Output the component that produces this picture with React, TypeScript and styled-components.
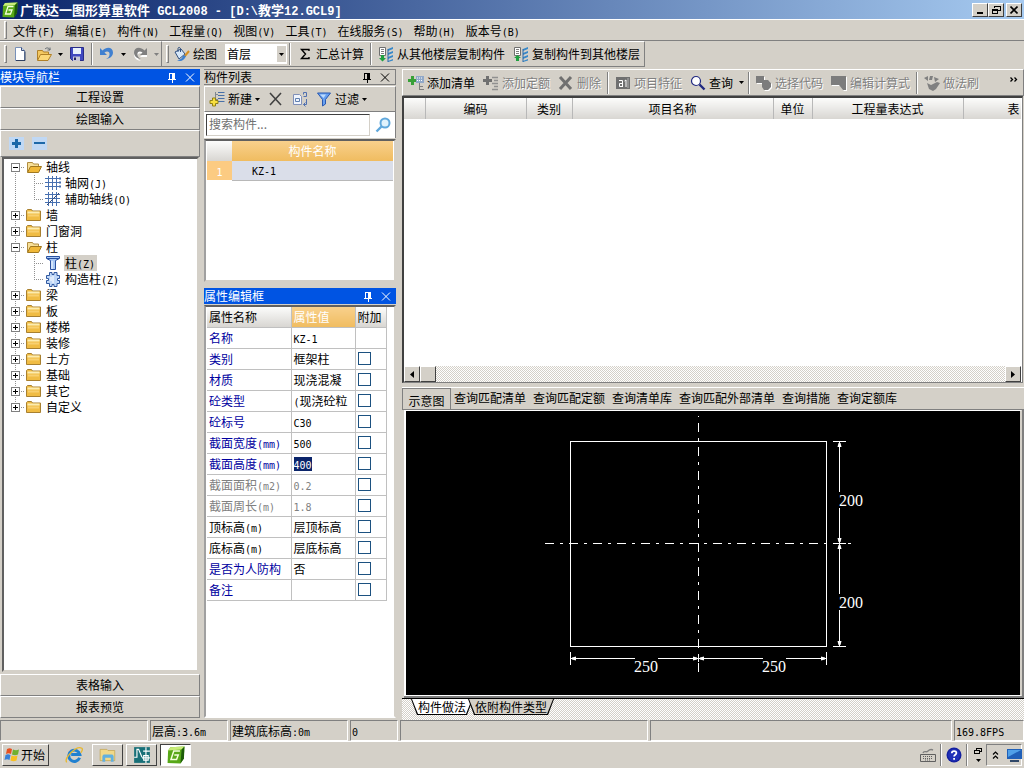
import React from "react";
import styled, { createGlobalStyle, css } from "styled-components";

const face = "#d4d0c8";
const shade = "#808080";
const blue = "#0054e3";

const GlobalStyle = createGlobalStyle`
  * { box-sizing: border-box; }
  body { margin: 0; background: ${face}; }
  body, button, input, select, table {
    font-family: "Noto Sans CJK SC", sans-serif;
    font-size: 12px;
    line-height: 16px;
    color: #000;
  }
  button { background: none; border: 0; padding: 0; white-space: nowrap; }
  ul { list-style: none; margin: 0; padding: 0; }
  svg { display: block; flex: none; }
`;

const raised = css`
  border: 1px solid;
  border-color: #fff ${shade} ${shade} #fff;
`;
const sunken = css`
  border: 1px solid;
  border-color: ${shade} #fff #fff ${shade};
`;
const checker = css`
  background: repeating-conic-gradient(#fff 0 25%, ${face} 0 50%) 0 0 / 2px 2px;
`;

/* ---------- text ---------- */

const Latin = styled.span`
  font-family: "DejaVu Sans Mono", monospace;
  font-size: 10px;
  line-height: 10px;
  white-space: pre;
`;

function Mixed({ text }: { text: string }) {
  return (
    <span>
      {text.split(/([\x20-\x7e]+)/).filter(Boolean).map((part, i) =>
        /^[\x20-\x7e]/.test(part) ? <Latin key={i}>{part}</Latin> : part
      )}
    </span>
  );
}

/* ---------- frame ---------- */

const Page = styled.div`
  display: flex;
  flex-direction: column;
  height: 100vh;
  min-height: 640px;
  min-width: 800px;
  overflow: hidden;
`;

const TitleBar = styled.header`
  display: flex;
  align-items: center;
  gap: 2px;
  height: 19px;
  flex: none;
  padding: 0 2px;
  background: linear-gradient(90deg, #0a246a, #a6caf0);
`;

const Title = styled.h1`
  flex: 1;
  margin: 0;
  font-size: 13px;
  line-height: 19px;
  font-weight: 700;
  color: #fff;
  ${Latin} {
    font-family: "Liberation Mono", monospace;
    font-size: 12px;
  }
`;

const WindowButtons = styled.div`
  display: flex;
  button:last-child { margin-left: 2px; }
`;

const WindowButton = styled.button`
  display: grid;
  place-items: center;
  width: 16px;
  height: 14px;
  background: ${face};
  border: 1px solid;
  border-color: #fff #404040 #404040 #fff;
`;

const MenuBar = styled.nav`
  display: flex;
  align-items: center;
  height: 22px;
  flex: none;
  border-top: 1px solid #fff;
  border-bottom: 1px solid ${shade};
  padding: 0 4px;
`;

const MenuButton = styled.button`
  padding: 1px 5px 0;
  height: 20px;
`;

const Grip = styled.span`
  flex: none;
  width: 3px;
  height: 18px;
  margin-right: 1px;
  ${raised}
`;

const ToolRow = styled.div`
  display: flex;
  height: 26px;
  flex: none;
`;

const ToolBand = styled.div`
  display: flex;
  align-items: center;
  padding-left: 4px;
  ${raised}
  border-left: 0;
`;

const Tool = styled.button<{ $off?: boolean }>`
  display: flex;
  align-items: center;
  gap: 3px;
  height: 22px;
  padding: 0 4px;
  flex: none;
  ${(p) => p.$off && css`color: ${shade}; text-shadow: 1px 1px #fff;`}
`;

const ArrowTool = styled(Tool)`
  padding: 0 2px;
`;

const Divider = styled.span<{ $h?: number }>`
  flex: none;
  width: 2px;
  height: ${(p) => p.$h ?? 22}px;
  margin: 0 2px;
  border-left: 1px solid ${shade};
  border-right: 1px solid #fff;
`;

const Combo = styled.div`
  display: flex;
  align-items: center;
  width: 62px;
  height: 20px;
  margin-left: 4px;
  background: #fff;
  border: 1px solid #fff;
`;

const ComboSelect = styled.select`
  appearance: none;
  flex: 1;
  min-width: 0;
  height: 18px;
  padding: 0 1px;
  border: 0;
  background: transparent;
`;

const ComboArrow = styled.span`
  display: grid;
  place-items: center;
  width: 9px;
  height: 16px;
  background: ${face};
`;

const Workspace = styled.main`
  display: grid;
  grid-template-columns: 200px 192px minmax(0, 1fr);
  flex: 1;
  min-height: 0;
  padding-top: 2px;
`;

const Column = styled.section`
  display: flex;
  flex-direction: column;
  min-height: 0;
  min-width: 0;
`;

const LeftColumn = styled(Column)`
  padding-bottom: 2px;
`;
const MiddleColumn = styled(Column)`
  margin-left: 4px;
  margin-right: -4px;
  padding-bottom: 2px;
`;
const RightColumn = styled(Column)`
  margin-left: 10px;
`;

/* ---------- dock panels ---------- */

const DockTitle = styled.div<{ $active?: boolean }>`
  display: flex;
  align-items: center;
  flex: none;
  height: 16px;
  padding-right: 4px;
  gap: 6px;
  color: ${(p) => (p.$active ? "#fff" : "#000")};
  background: ${(p) => (p.$active ? blue : face)};
  border: ${(p) => (p.$active ? "0" : `1px solid ${shade}`)};
  border-left: 0;
  margin-bottom: 1px;
  h2 { flex: 1; margin: 0; font-size: 12px; line-height: 14px; font-weight: 400; }
  button { color: inherit; width: 12px; height: 12px; }
`;

function DockHeader({ title, active }: { title: string; active?: boolean }) {
  return (
    <DockTitle $active={active}>
      <h2>{title}</h2>
      <button aria-label="pin">
        <svg width="12" height="12" viewBox="0 0 12 12" shapeRendering="crispEdges" fill="currentColor">
          <path d="M3 2h6v6h1v1H7v3H6V9H2V8h1zM4 3v5h2V3z" fillRule="evenodd" />
        </svg>
      </button>
      <button aria-label="close">
        <svg width="12" height="12" viewBox="0 0 12 12" stroke="currentColor" fill="none">
          <path d="M2 2.500l8 8M10 2.500l-8 8" />
        </svg>
      </button>
    </DockTitle>
  );
}

const NavButton = styled.button`
  flex: none;
  height: 22px;
  ${raised}
`;

const TreeTools = styled.div`
  display: flex;
  align-items: center;
  gap: 8px;
  flex: none;
  height: 27px;
  padding: 0 8px;
  ${raised}
`;

const SquareButton = styled.button`
  display: grid;
  place-items: center;
  width: 15px;
  height: 13px;
  background: #c0d8f4;
`;

const TreeBox = styled.div`
  flex: 1;
  min-height: 0;
  overflow: hidden;
  background: #fff;
  border: 2px solid;
  border-color: #606060 ${face} ${face} #606060;
  margin: 0 1px 2px 2px;
`;

const dotsDown = "repeating-linear-gradient(#909090 0 1px, transparent 1px 2px)";
const dotsAcross = "repeating-linear-gradient(90deg, #909090 0 1px, transparent 1px 2px)";

const TreeRow = styled.div`
  display: flex;
  align-items: center;
  height: 16px;
`;

type Run = "full" | "top" | "bottom";

const Branch = styled.span<{ $run: Run; $arm?: boolean; $x: number; $w: number }>`
  display: flex;
  align-items: center;
  flex: none;
  width: ${(p) => p.$w}px;
  height: 16px;
  padding-left: ${(p) => p.$x - 4}px;
  background:
    ${dotsDown} ${(p) => p.$x}px ${(p) => (p.$run === "bottom" ? 8 : 0)}px / 1px ${(p) => (p.$run === "full" ? 16 : 8)}px no-repeat,
    ${dotsAcross} ${(p) => p.$x}px 8px / ${(p) => (p.$arm ? p.$w - p.$x - 1 : 0)}px 1px no-repeat;
`;

const Expander = styled.button`
  display: grid;
  place-items: center;
  width: 9px;
  height: 9px;
  background: #fff;
  border: 1px solid ${shade};
`;

const TreeLabel = styled.span<{ $selected?: boolean }>`
  margin-left: 3px;
  padding: 0 2px 0 1px;
  line-height: 16px;
  background: ${(p) => (p.$selected ? face : "transparent")};
`;

/* ---------- component list ---------- */

const ListTools = styled.div`
  display: flex;
  align-items: center;
  flex: none;
  height: 26px;
  ${raised}
`;

const SearchRow = styled.form`
  display: flex;
  align-items: center;
  flex: none;
  height: 26px;
  padding-left: 2px;
  background: #fff;
  border-right: 1px solid ${shade};
  button { display: grid; place-items: center; flex: 1; }
`;

const SearchInput = styled.input`
  width: 164px;
  height: 22px;
  padding: 0 2px 4px;
  border: 1px solid;
  border-color: #404040 ${face} ${face} #404040;
  outline: 0;
  &::placeholder { color: #707070; opacity: 1; }
`;

const ListBox = styled.div`
  height: 143px;
  flex: none;
  margin: 1px 0 6px;
  padding: 0 1px;
  background: #fff;
  border: 2px solid;
  border-color: #606060 ${face} ${face} #a0a0a0;
`;

const orange = "linear-gradient(#f8d08c, #f0bc60)";
const silver = "linear-gradient(#fcfcfb, #d8d6d2)";

const ListTable = styled.table`
  width: 100%;
  table-layout: fixed;
  border-collapse: collapse;
  th, td { padding: 0; font-weight: 400; }
  thead th { height: 20px; color: #fff; background: ${orange}; }
  thead td { background: ${silver}; }
  tbody th { height: 19px; color: #fff; background: #fccb82; }
  tbody td { padding-left: 20px; background: #dadee9; border-bottom: 1px solid #b8b8b8; }
`;

/* ---------- property grid ---------- */

const PropBox = styled.div`
  flex: 1;
  min-height: 0;
  overflow: hidden;
  padding-left: 1px;
  background: #fff;
  border: 2px solid;
  border-color: #606060 ${face} #fff #a0a0a0;
`;

const PropTable = styled.table`
  width: 179px;
  table-layout: fixed;
  border-collapse: collapse;
  th, td {
    height: 21px;
    padding: 0 0 0 2px;
    font-weight: 400;
    text-align: left;
    white-space: nowrap;
    overflow: hidden;
    border-right: 1px solid #c0c0c0;
    border-bottom: 1px solid #c0c0c0;
  }
  thead th { height: 20px; background: ${silver}; }
  thead th:nth-child(2) { color: #fff; background: ${orange}; }
`;

const PropRow = styled.tr<{ $tone: "blue" | "gray" | "black" }>`
  th { color: ${(p) => ({ blue: "#0000a0", gray: "#808080", black: "#000" })[p.$tone]}; }
  td { color: ${(p) => (p.$tone === "gray" ? "#808080" : "#000")}; }
`;

const Tick = styled.input`
  appearance: none;
  display: block;
  width: 13px;
  height: 13px;
  margin: 0;
  border: 1px solid #1c5180;
  background: #fff;
`;

const Highlight = styled.mark`
  display: inline-block;
  line-height: 14px;
  color: #fff;
  background: #0a246a;
`;

/* ---------- bill table ---------- */

const BillTools = styled.div`
  display: flex;
  align-items: center;
  flex: none;
  height: 27px;
  padding-left: 1px;
  overflow: hidden;
  ${raised}
`;

const Chevron = styled.button`
  margin-left: auto;
  padding: 0 5px 6px;
`;

const BillBox = styled.div`
  display: flex;
  flex-direction: column;
  flex: 287 1 0;
  min-height: 0;
  background: #fff;
  border: 1px solid;
  border-color: #404040 ${shade} ${shade} #404040;
  border-width: 2px 1px 1px 2px;
  padding-right: 1px;
  margin: 0 1px 4px 0;
`;

const BillTable = styled.table`
  width: 100%;
  table-layout: fixed;
  border-collapse: collapse;
  th {
    height: 21px;
    padding: 0;
    font-weight: 400;
    white-space: nowrap;
    overflow: hidden;
    background: ${silver};
    border-right: 1px solid #b8b8b8;
  }
  th:last-child { padding-left: 44px; text-align: left; border-right: 0; }
`;

const ScrollTrack = styled.div`
  display: flex;
  flex: none;
  height: 16px;
  margin-top: auto;
  ${checker}
  button:last-child { margin-left: auto; }
`;

const ScrollPart = styled.button`
  display: grid;
  place-items: center;
  width: 16px;
  height: 16px;
  background: ${face};
  border: 1px solid;
  border-color: #fff #404040 #404040 #fff;
`;

/* ---------- schematic ---------- */

const QueryTabs = styled.div`
  display: flex;
  flex: none;
  gap: 7px;
  height: 23px;
  border-top: 1px solid #fff;
  border-bottom: 1px solid ${shade};
  button { height: 20px; }
  button:first-child {
    height: 22px;
    width: 49px;
    margin-right: -4px;
    padding-top: 3px;
    border: 1px solid ${shade};
    border-bottom: 0;
  }
`;

const Canvas = styled.div`
  display: flex;
  flex: 287 1 0;
  min-height: 0;
  background: #000;
  border: 2px solid #fff;
  border-right-color: ${face};
  border-width: 1px 2px 1px 2px;
  box-shadow: 0 2px #808080, 2px 0 #808080, 2px 2px #808080;
  margin: 0 2px 2px;
  svg { width: 100%; height: 100%; }
`;

const SheetTabs = styled.div`
  display: flex;
  flex: none;
  height: 22px;
  padding-left: 9px;
  border-top: 1px solid #000;
  ${checker}
`;

const SheetTab = styled.button<{ $on?: boolean }>`
  height: 16px;
  padding: 0 1px 1px;
  background: #000;
  clip-path: polygon(0 0, 100% 0, calc(100% - 6px) 100%, 6px 100%);
  & + & { margin-left: -5px; }
  span {
    display: block;
    height: 15px;
    padding: 0 6px;
    line-height: 15px;
    background: ${(p) => (p.$on ? "#fff" : face)};
    clip-path: polygon(0 0, 100% 0, calc(100% - 6px) 100%, 6px 100%);
  }
`;

/* ---------- status bar and taskbar ---------- */

const StatusBar = styled.footer`
  display: flex;
  gap: 2px;
  flex: none;
  height: 21px;
`;

const StatusCell = styled.div<{ $w?: number }>`
  ${(p) => (p.$w ? css`width: ${p.$w}px; flex: none;` : css`flex: 1;`)}
  padding: 0 1px;
  line-height: 19px;
  white-space: nowrap;
  ${sunken}
`;

const Taskbar = styled.div`
  display: flex;
  align-items: center;
  gap: 3px;
  flex: none;
  height: 27px;
  padding: 0 2px;
  border-top: 1px solid #fff;
`;

const StartButton = styled.button`
  display: flex;
  align-items: center;
  gap: 1px;
  width: 47px;
  height: 22px;
  padding: 0 1px;
  border: 1px solid;
  border-color: #fff #404040 #404040 #fff;
  margin-right: 6px;
`;

const TaskButton = styled.button<{ $look: "flat" | "up" | "down" }>`
  display: grid;
  place-items: center;
  width: 31px;
  height: 22px;
  border: 1px solid transparent;
  ${(p) => p.$look === "up" && css`border-color: #fff #404040 #404040 #fff;`}
  ${(p) => p.$look === "down" && css`background: #fff; border-color: #404040 #fff #fff #404040;`}
`;

const Tray = styled.div`
  display: flex;
  align-items: center;
  gap: 2px;
  margin-left: auto;
`;

const TrayStack = styled.div`
  display: grid;
  justify-items: center;
  gap: 4px;
  width: 12px;
`;

const TrayBox = styled.div`
  display: flex;
  align-items: center;
  gap: 7px;
  width: 36px;
  height: 22px;
  padding: 0 1px 0 5px;
  ${sunken}
`;

/* ---------- drawings ---------- */

const Arrow = ({ dir = "down" }: { dir?: "down" | "left" | "right" }) => {
  const d = { down: "M0 0h5L2.500 3z", left: "M4 0v7L0 3.500z", right: "M0 0v7l4-3.500z" }[dir];
  const [w, h] = dir === "down" ? [5, 3] : [4, 7];
  return <svg width={w} height={h} viewBox={`0 0 ${w} ${h}`}><path d={d} fill="currentColor" /></svg>;
};

const Glyph = ({ children, size = 16 }: { children: React.ReactNode; size?: number }) => (
  <svg width={size} height={size} viewBox="0 0 16 16" fill="none" aria-hidden="true">{children}</svg>
);

const AppLogo = ({ size = 16 }: { size?: number }) => (
  <Glyph size={size}>
    <path d="M3 1L15.500.5 15 11l-3 4.500L.5 15 1 4z" fill="#58a818" />
    <path d="M3 1L15.500.5 13 3 1 4z" fill="#c8ec78" />
    <path d="M13 3l2.500-2.500L15 11l-3 4.500z" fill="#1c5c08" />
    <path d="M11.500 4.500H6L3.500 12h5l1.500-4H6.500" stroke="#f4ffdc" strokeWidth="1.300" />
  </Glyph>
);
const NewIcon = () => (
  <Glyph>
    <path d="M3.500 1.500h6l3 3v10h-9z" fill="#fff" stroke="#7890b8" />
    <path d="M9.500 1.500v3h3" fill="#c8d8f0" stroke="#405078" />
    <path d="M4 14.500h9v-9" stroke="#304060" />
  </Glyph>
);
const OpenIcon = () => (
  <Glyph>
    <path d="M1.500 14V4.500h5l1 1.500h5v3" fill="#f4c860" stroke="#b08028" />
    <path d="M1.500 14.500l3-6h11l-3.500 6z" fill="#fcd878" stroke="#b08028" />
    <path d="M9 3c2-2 4-1 5 1m0-2.500V4h-2.500" stroke="#606870" />
  </Glyph>
);
const SaveIcon = () => (
  <Glyph>
    <path d="M1.500 1.500h13v13h-11l-2-2z" fill="#4048c0" stroke="#282c88" />
    <path d="M4 2h8v6H4z" fill="#e8f0fc" />
    <path d="M4 10.500h7V15H4z" fill="#c8c8d8" /><path d="M5 11.500h2V14H5z" fill="#202060" />
  </Glyph>
);
const UndoIcon = ({ off, redo }: { off?: boolean; redo?: boolean }) => (
  <Glyph>
    <g transform={redo ? "translate(16 0) scale(-1 1)" : undefined}>
      {off && <path d="M2 3v7h7L6.500 7.500C9 5 12 6.500 11.500 9.500c0 2-1.500 3.500-3.500 4.500 4-.5 7-3 7-6.500C15 2.500 9 1 4.500 5.500z" fill="#fff" transform="translate(-1 1)" />}
      <path d="M1 2v7h7L5.500 6.500C8 4.500 11 5.500 10.500 8.500c0 2-1.500 3.500-3.500 4.500 4-.5 7-3 7-6.500C14 1.500 8 0 3.500 4.500z" fill={off ? "#808080" : "#4080d0"} />
    </g>
  </Glyph>
);
const PaintIcon = () => (
  <Glyph>
    <path d="M1 6l6-3 4 5-6 5z" fill="#d8e8f8" stroke="#305080" />
    <path d="M4 6V2.500C4 1 6.500 1 6.500 3v3" stroke="#305080" />
    <path d="M15 5l-5 6" stroke="#d89020" strokeWidth="2" />
    <path d="M3 14c3 2 7 1 9-4l-3-1c0 3-3 5-6 5z" fill="#3c80d0" />
  </Glyph>
);
const CopyFloorIcon = ({ up }: { up?: boolean }) => (
  <Glyph>
    <path d="M1.500 1.500h6v8h-6z" fill="#fff" stroke="#707070" />
    <path d="M3 3.500h3M3 5.500h3M3 7.500h3" stroke="#808080" />
    <path d="M10 3l5-2v2l-5 2zM10 7l5-2v2l-5 2zM10 11l5-2v2l-5 2zM10 15l5-2v1.500L10 16z" fill="#3888c8" />
    <path d="M10 3v13" stroke="#2868a8" />
    <path d={up ? "M3 15v-3H1l3.500-3L8 12H6v3z" : "M3 9v3H1l3.500 3.500L8 12H6V9z"} fill="#20a040" />
  </Glyph>
);
const AddListIcon = () => (
  <Glyph>
    <path d="M6.500 1v6M6.500 3.500H9M6.500 8.500H9" stroke="#808890" />
    <path d="M9 1.500h6.500M9 4.500h6.500M9 7.500h6.500M9 10.500h6.500" stroke="#4870a8" />
    <path d="M3.500 7h3v2.500H9v3H6.500V15h-3v-2.500H1v-3h2.500z" fill="#f8e040" stroke="#908018" />
  </Glyph>
);
const CrossIcon = ({ off }: { off?: boolean }) => (
  <Glyph>
    <path d="M2 2l11 12M13 2L2 14" stroke={off ? "#707070" : "#404040"} strokeWidth={off ? 3 : 1.6} />
  </Glyph>
);
const CopyIcon = () => (
  <Glyph>
    <path d="M1.500 3.500h6l2 2v8h-8z" fill="#f0f4fc" stroke="#8090b8" />
    <path d="M3.500 7.500h4v3h-4z" stroke="#6080b0" />
    <path d="M11.500 3.500V1.500h3v4h-3M14.500 8v5.500h-3m2-2l-2 2 2 2" stroke="#5070b0" />
  </Glyph>
);
const FunnelIcon = () => (
  <Glyph><path d="M1.500 2h13L9.500 8.500V13l-3 2V8.500z" fill="#68a0f0" stroke="#2858b0" /><path d="M4 3.500h6L7.500 7z" fill="#c0dcfc" /></Glyph>
);
const LensIcon = ({ pale }: { pale?: boolean }) => (
  <Glyph>
    <g transform={pale ? "translate(16 0) scale(-1 1)" : undefined}>
      <circle cx="6" cy="6" r="4.500" fill={pale ? "#e0f2fc" : "#fff"} stroke={pale ? "#60a8dc" : "#202880"} strokeWidth={pale ? 2 : 1.2} />
      <path d="M9.500 9.500L14.500 14.500" stroke={pale ? "#60a8dc" : "#202880"} strokeWidth="2.400" />
    </g>
  </Glyph>
);
const AddBillIcon = ({ off }: { off?: boolean }) => (
  <Glyph>
    <path d="M3 1h3v3h3v3H6v3H3V7H0V4h3z" fill={off ? "#707070" : "#38a038"} />
    {off ? (
      <path d="M9 2.500h6M11 5.500h4M9 8.500h6M11 11.500h4M9 14.500h6" stroke="#909090" strokeWidth="1.500" />
    ) : (
      <>
        <path d="M8 1h8v7H8z" fill="#90a8c8" /><path d="M9 3h6M9 5.500h6" stroke="#fff" strokeDasharray="1 1" />
        <path d="M11.500 8v7M11.500 11.500H15M11.500 14.500H16" stroke="#808080" />
      </>
    )}
  </Glyph>
);
const FeatureIcon = () => (
  <Glyph>
    <path d="M1 2h14v12H1z" fill="#707070" />
    <path d="M4 5.500h3.500v6M7 8.500H4.500v3H8M9.500 6l1.500-1v7" stroke="#fff" /><path d="M13 3v10" stroke="#b0b0b0" />
  </Glyph>
);
const CodeIcon = ({ edit }: { edit?: boolean }) => (
  <Glyph>
    <path d={edit ? "M0 1h15v14h-3l-4-5H0z" : "M0 1h8v4h4l3 3v4l-3 3H8l-2-3V8H0z"} fill="#fff" transform="translate(1 1)" />
    <path d={edit ? "M0 1h15v14h-3l-4-5H0z" : "M0 1h8v4h4l3 3v4l-3 3H8l-2-3V8H0z"} fill="#7c7c7c" />
  </Glyph>
);
const BrushIcon = () => (
  <Glyph>
    <path d="M0 3l4-2v5zM6 1h3l-1 4H5zM10 2l5 2-4 3z" fill="#808080" />
    <path d="M3 8l4 2 6-3 3 1-4 6-3 2-4-2z" fill="#808080" />
  </Glyph>
);
const FolderIcon = ({ open }: { open?: boolean }) => (
  <Glyph>
    {open ? (
      <>
        <path d="M1.500 13V3.500h5l1 1.500h5v3" fill="#f8e098" stroke="#b08c40" />
        <path d="M1.500 13.500l3-6h11l-3 6z" fill="#f0b838" stroke="#a07820" />
      </>
    ) : (
      <>
        <path d="M.5 13.500v-10l1-1h4l1 1.500h8v9.500z" fill="#f0bc44" stroke="#a88030" />
        <path d="M1.500 5.500h12" stroke="#fcecb0" strokeWidth="2" /><path d="M2 8.500h11" stroke="#f8d070" strokeWidth="2" />
      </>
    )}
  </Glyph>
);
const AxisIcon = ({ extra }: { extra?: boolean }) => (
  <Glyph>
    <path d="M3.500 1v14M7.500 1v14M11.500 1v14M0 3.500h15M0 7.500h15M0 11.500h15" stroke="#4870b0" />
    {extra ? <path d="M2 14L14 2" stroke="#304878" /> : <path d="M14 2.500h2v2h-2zM14 6.500h2v2h-2zM14 10.500h2v2h-2z" fill="#4870b0" />}
  </Glyph>
);
const ColumnIcon = () => (
  <Glyph><path d="M1.500 1.500h13v2l-4 2v9h-5v-9l-4-2z" fill="#a8c8f4" stroke="#2850a0" /><path d="M2 3.500h12" stroke="#2850a0" /><path d="M7 6v8" stroke="#fff" /></Glyph>
);
const TieColumnIcon = () => (
  <Glyph>
    <path d="M4.500 1.500H7v2h2v-2h3v3h2.500v3h-2v2h2v3H12v3H9v-2H7v2H4.500v-3H1.500v-3h2v-2h-2v-3h3z" fill="#c0d8f8" stroke="#3058a0" />
    <path d="M8 5v7M6 6v4" stroke="#fff" />
  </Glyph>
);
const FlagIcon = () => (
  <Glyph>
    <path d="M3 2c2-1 3-1 5 0L7 7C5 6 4 6 2 7z" fill="#e85020" /><path d="M9 2.500c2 1 4 1 6 0L14 7.500c-2 1-4 1-6 0z" fill="#70b030" />
    <path d="M1.500 8c2-1 3-1 5 0l-1 5c-2-1-3-1-5 0z" fill="#3880d8" /><path d="M7.500 8.500c2 1 4 1 6 0l-1 5c-2 1-4 1-6 0z" fill="#f8c020" />
  </Glyph>
);
const BrowserIcon = () => (
  <Glyph size={18}>
    <path d="M13 10.500a5 5 0 1 1 .2-3H5.500" stroke="#2080d0" strokeWidth="2.600" />
    <path d="M1.500 14.500C-1 11 10-1 15 2c1 .8 0 3-1 4" stroke="#e8b830" strokeWidth="1.200" />
  </Glyph>
);
const ExplorerIcon = () => (
  <Glyph size={18}>
    <path d="M1 3h6l1 1h6v9H1z" fill="#f0d888" stroke="#c0a048" strokeWidth=".6" />
    <path d="M3 14V9.500C3 8 4 7.500 5 7.500h6c1 0 2 .5 2 2V14h-2.500v-3.500h-5V14z" fill="#60b0e0" />
  </Glyph>
);
const CadIcon = () => (
  <Glyph size={18}>
    <path d="M1 1h14v14H1z" fill="#187078" />
    <path d="M1 10h2.500V3H5l3 7M11.500 1v14M8 10.500h7M9 4.500h6M9.500 8.500h4v4h-4z" stroke="#fff" />
  </Glyph>
);
const KeyboardIcon = () => (
  <Glyph>
    <path d="M.5 7.500h15v7H.5z" stroke="#606060" /><path d="M3 9.500h10M3 11.500h10M5 13h6" stroke="#606060" strokeDasharray="1 1" />
    <path d="M3 6c1-3 3 0 5-2s3-2 5-1" stroke="#808080" strokeWidth="1.400" />
  </Glyph>
);
const HelpIcon = () => (
  <Glyph>
    <circle cx="8" cy="8" r="7.500" fill="#1420a0" /><circle cx="8" cy="8" r="6" fill="#2030b8" />
    <path d="M5.800 6.200C5.800 3.400 10.400 3.400 10.400 6c0 1.800-2.300 1.800-2.300 3.600M8.100 11v1.800" stroke="#fff" strokeWidth="1.800" />
  </Glyph>
);
const ScreenIcon = () => (
  <Glyph><path d="M1 2h15v10H1z" fill="#2060b8" /><path d="M2 3h13L2 10z" fill="#50a0e8" /><path d="M4 13h9v2H4z" fill="#304868" /></Glyph>
);

function Schematic() {
  return (
    <svg viewBox="0 0 612 284" role="img" aria-label="示意图">
      <g stroke="#fff" fill="none" shapeRendering="crispEdges">
        <rect x="163.500" y="30.500" width="256" height="205" />
        <path d="M291.500 5v256" strokeDasharray="9 6 3 6" strokeDashoffset="17" />
        <path d="M138 132.500h306" strokeDasharray="9 6 3 6" />
        <path d="M426 30.500h13M426 235.500h13M426 132.500h13M432.500 31v50M432.500 97v86M432.500 199v36" />
        <path d="M163.500 241v13M419.500 241v13M163 247.500h65M251 247.500h105M379 247.500h41M291.500 244v7" />
      </g>
      <g fill="#fff">
        <path d="M430.500 36h4l-1-4h-2zM430.500 127h4l-1 4h-2zM430.500 138h4l-1-4h-2zM430.500 230h4l-1 4h-2z" />
        <path d="M169 245.500v4l-4-1v-2zM286 245.500v4l4-1v-2zM297 245.500v4l-4-1v-2zM414 245.500v4l4-1v-2z" />
      </g>
      <g fill="#fff" fontFamily="Liberation Serif, serif" fontSize="16">
        <text x="432" y="95">200</text>
        <text x="432" y="197">200</text>
        <text x="227" y="261">250</text>
        <text x="355" y="261">250</text>
      </g>
    </svg>
  );
}

/* ---------- data ---------- */

const menus = ["文件(F)", "编辑(E)", "构件(N)", "工程量(Q)", "视图(V)", "工具(T)", "在线服务(S)", "帮助(H)", "版本号(B)"];

type Leaf = { label: string; icon: React.ReactNode; selected?: boolean };
const tree: { label: string; children?: Leaf[] }[] = [
  { label: "轴线", children: [{ label: "轴网(J)", icon: <AxisIcon /> }, { label: "辅助轴线(O)", icon: <AxisIcon extra /> }] },
  { label: "墙" },
  { label: "门窗洞" },
  { label: "柱", children: [{ label: "柱(Z)", icon: <ColumnIcon />, selected: true }, { label: "构造柱(Z)", icon: <TieColumnIcon /> }] },
  { label: "梁" }, { label: "板" }, { label: "楼梯" }, { label: "装修" },
  { label: "土方" }, { label: "基础" }, { label: "其它" }, { label: "自定义" },
];

type Tone = "blue" | "gray" | "black";
const props: [string, string, Tone][] = [
  ["名称", "KZ-1", "blue"],
  ["类别", "框架柱", "blue"],
  ["材质", "现浇混凝", "blue"],
  ["砼类型", "(现浇砼粒", "blue"],
  ["砼标号", "C30", "blue"],
  ["截面宽度(mm)", "500", "blue"],
  ["截面高度(mm)", "400", "blue"],
  ["截面面积(m2)", "0.2", "gray"],
  ["截面周长(m)", "1.8", "gray"],
  ["顶标高(m)", "层顶标高", "black"],
  ["底标高(m)", "层底标高", "black"],
  ["是否为人防构", "否", "blue"],
  ["备注", "", "blue"],
];

const queries = ["示意图", "查询匹配清单", "查询匹配定额", "查询清单库", "查询匹配外部清单", "查询措施", "查询定额库"];

/* ---------- sections ---------- */

function NavTree() {
  return (
    <TreeBox>
      <ul>
        {tree.map((node, i) => (
          <li key={node.label}>
            <TreeRow>
              <Branch $x={11} $w={22} $arm $run={i === 0 ? "bottom" : i === tree.length - 1 ? "top" : "full"}>
                <Expander aria-label={node.label}>
                  <svg width="5" height="5" viewBox="0 0 5 5" shapeRendering="crispEdges">
                    <path d={node.children ? "M0 2h5v1H0z" : "M0 2h2V0h1v2h2v1H3v2H2V3H0z"} />
                  </svg>
                </Expander>
              </Branch>
              <FolderIcon open={!!node.children} />
              <TreeLabel>{node.label}</TreeLabel>
            </TreeRow>
            {node.children && (
              <ul>
                {node.children.map((leaf, j) => (
                  <TreeRow as="li" key={leaf.label}>
                    <Branch $x={11} $w={22} $run="full" />
                    <Branch $x={8} $w={19} $arm $run={j === node.children!.length - 1 ? "top" : "full"} />
                    {leaf.icon}
                    <TreeLabel $selected={leaf.selected}><Mixed text={leaf.label} /></TreeLabel>
                  </TreeRow>
                ))}
              </ul>
            )}
          </li>
        ))}
      </ul>
    </TreeBox>
  );
}

function PropertyGrid() {
  return (
    <PropBox>
      <PropTable>
        <colgroup><col width="84" /><col width="64" /><col width="31" /></colgroup>
        <thead><tr><th>属性名称</th><th>属性值</th><th>附加</th></tr></thead>
        <tbody>
          {props.map(([name, value, tone], i) => (
            <PropRow key={name} $tone={tone}>
              <th scope="row"><Mixed text={name} /></th>
              <td>{value === "400" ? <Highlight><Mixed text={value} /></Highlight> : <Mixed text={value} />}</td>
              <td>{i > 0 && <Tick type="checkbox" aria-label={name} />}</td>
            </PropRow>
          ))}
        </tbody>
      </PropTable>
    </PropBox>
  );
}

export default function App() {
  return (
    <Page>
      <GlobalStyle />
      <TitleBar>
        <AppLogo />
        <Title><Mixed text="广联达一图形算量软件 GCL2008 - [D:\教学12.GCL9]" /></Title>
        <WindowButtons>
          <WindowButton aria-label="minimize"><svg width="8" height="8"><path d="M1 6h6v2H1z" /></svg></WindowButton>
          <WindowButton aria-label="restore">
            <svg width="9" height="9" shapeRendering="crispEdges" fill="none" stroke="#000">
              <path d="M2.500 3V1.500h6v4H6M3 1.500h6M.5 4.500h5v4h-5zM0 4.500h6" /><path d="M2 1h7M0 5h6" />
            </svg>
          </WindowButton>
          <WindowButton aria-label="close"><svg width="8" height="8" stroke="#000" strokeWidth="1.600"><path d="M.5.500l7 7M7.500.500l-7 7" /></svg></WindowButton>
        </WindowButtons>
      </TitleBar>

      <MenuBar>
        <Grip />
        {menus.map((m) => <MenuButton key={m}><Mixed text={m} /></MenuButton>)}
      </MenuBar>

      <ToolRow>
        <ToolBand>
          <Grip />
          <Tool aria-label="new"><NewIcon /></Tool>
          <Tool aria-label="open"><OpenIcon /></Tool>
          <ArrowTool aria-label="open list"><Arrow /></ArrowTool>
          <Tool aria-label="save"><SaveIcon /></Tool>
          <Divider />
          <Tool aria-label="undo"><UndoIcon /></Tool>
          <ArrowTool aria-label="undo list"><Arrow /></ArrowTool>
          <Tool aria-label="redo"><UndoIcon off redo /></Tool>
          <ArrowTool $off aria-label="redo list"><Arrow /></ArrowTool>
        </ToolBand>
        <ToolBand>
          <Grip />
          <Tool><PaintIcon />绘图</Tool>
          <Combo>
            <ComboSelect aria-label="楼层"><option>首层</option></ComboSelect>
            <ComboArrow><Arrow /></ComboArrow>
          </Combo>
          <Divider />
          <Tool>
            <svg width="16" height="16" viewBox="0 0 16 16" fill="none" stroke="#000" strokeWidth="1.400"><path d="M12 5V3.500H4.500L8.500 8l-4 4.500H12V11" /></svg>
            汇总计算
          </Tool>
          <Divider />
          <Tool><CopyFloorIcon />从其他楼层复制构件</Tool>
          <Tool><CopyFloorIcon up />复制构件到其他楼层</Tool>
        </ToolBand>
      </ToolRow>

      <Workspace>
        <LeftColumn>
          <DockHeader title="模块导航栏" active />
          <NavButton>工程设置</NavButton>
          <NavButton>绘图输入</NavButton>
          <TreeTools>
            <SquareButton aria-label="expand all"><svg width="9" height="9"><path d="M0 3h3V0h3v3h3v3H6v3H3V6H0z" fill="#1c68a8" /></svg></SquareButton>
            <SquareButton aria-label="collapse all"><svg width="11" height="3"><path d="M0 0h11v2H0z" fill="#1c68a8" /></svg></SquareButton>
          </TreeTools>
          <NavTree />
          <NavButton>表格输入</NavButton>
          <NavButton>报表预览</NavButton>
        </LeftColumn>

        <MiddleColumn>
          <DockHeader title="构件列表" />
          <ListTools>
            <Tool><AddListIcon />新建<Arrow /></Tool>
            <Tool aria-label="delete"><CrossIcon /></Tool>
            <Tool aria-label="copy"><CopyIcon /></Tool>
            <Tool><FunnelIcon />过滤<Arrow /></Tool>
          </ListTools>
          <SearchRow>
            <SearchInput aria-label="搜索构件" placeholder="搜索构件..." />
            <button type="button" aria-label="search"><LensIcon pale /></button>
          </SearchRow>
          <ListBox>
            <ListTable>
              <colgroup><col width="25" /><col /></colgroup>
              <thead><tr><td /><th>构件名称</th></tr></thead>
              <tbody><tr><th scope="row"><Mixed text="1" /></th><td><Mixed text="KZ-1" /></td></tr></tbody>
            </ListTable>
          </ListBox>
          <DockHeader title="属性编辑框" active />
          <PropertyGrid />
        </MiddleColumn>

        <RightColumn>
          <BillTools>
            <Tool><AddBillIcon />添加清单</Tool>
            <Tool $off><AddBillIcon off />添加定额</Tool>
            <Tool $off><CrossIcon off />删除</Tool>
            <Divider />
            <Tool $off><FeatureIcon />项目特征</Tool>
            <Tool><LensIcon />查询</Tool>
            <ArrowTool aria-label="查询选项"><Arrow /></ArrowTool>
            <Divider />
            <Tool $off><CodeIcon />选择代码</Tool>
            <Tool $off><CodeIcon edit />编辑计算式</Tool>
            <Divider />
            <Tool $off><BrushIcon />做法刷</Tool>
            <Chevron aria-label="more">
              <svg width="8" height="5" fill="none" stroke="#000" strokeWidth="1.300"><path d="M.5.500l2 2-2 2M4.500.500l2 2-2 2" /></svg>
            </Chevron>
          </BillTools>
          <BillBox>
            <BillTable>
              <colgroup>
                <col width="21" /><col width="101" /><col width="46" /><col width="201" /><col width="39" /><col width="151" /><col />
              </colgroup>
              <thead>
                <tr><th /><th>编码</th><th>类别</th><th>项目名称</th><th>单位</th><th>工程量表达式</th><th>表</th></tr>
              </thead>
            </BillTable>
            <ScrollTrack>
              <ScrollPart aria-label="scroll left"><Arrow dir="left" /></ScrollPart>
              <ScrollPart aria-label="scroll thumb" />
              <ScrollPart aria-label="scroll right"><Arrow dir="right" /></ScrollPart>
            </ScrollTrack>
          </BillBox>
          <QueryTabs>{queries.map((q) => <button key={q}>{q}</button>)}</QueryTabs>
          <Canvas><Schematic /></Canvas>
          <SheetTabs>
            <SheetTab $on><span>构件做法</span></SheetTab>
            <SheetTab><span>依附构件类型</span></SheetTab>
          </SheetTabs>
        </RightColumn>
      </Workspace>

      <StatusBar>
        <StatusCell $w={148} />
        <StatusCell $w={78}><Mixed text="层高:3.6m" /></StatusCell>
        <StatusCell $w={118}><Mixed text="建筑底标高:0m" /></StatusCell>
        <StatusCell $w={48}><Mixed text="0" /></StatusCell>
        <StatusCell $w={248} />
        <StatusCell />
        <StatusCell $w={70}><Mixed text="169.8FPS" /></StatusCell>
      </StatusBar>

      <Taskbar>
        <StartButton><FlagIcon />开始</StartButton>
        <TaskButton $look="flat" aria-label="browser"><BrowserIcon /></TaskButton>
        <TaskButton $look="up" aria-label="explorer"><ExplorerIcon /></TaskButton>
        <TaskButton $look="up" aria-label="cad"><CadIcon /></TaskButton>
        <TaskButton $look="down" aria-label="GCL"><AppLogo size={18} /></TaskButton>
        <Tray>
          <KeyboardIcon />
          <Divider />
          <HelpIcon />
          <Divider />
          <TrayStack>
            <svg width="8" height="7" fill="none" stroke="#000" shapeRendering="crispEdges"><path d="M2.500 2V.500h5v3H6M.5 2.500h5v3h-5z" /></svg>
            <Arrow />
          </TrayStack>
          <TrayBox>
            <svg width="7" height="8" fill="none" stroke="#000" strokeWidth="1.200"><path d="M1 3.500l2.500-2.500L6 3.500M1 7.500L3.500 5 6 7.500" /></svg>
            <ScreenIcon />
          </TrayBox>
        </Tray>
      </Taskbar>
    </Page>
  );
}
